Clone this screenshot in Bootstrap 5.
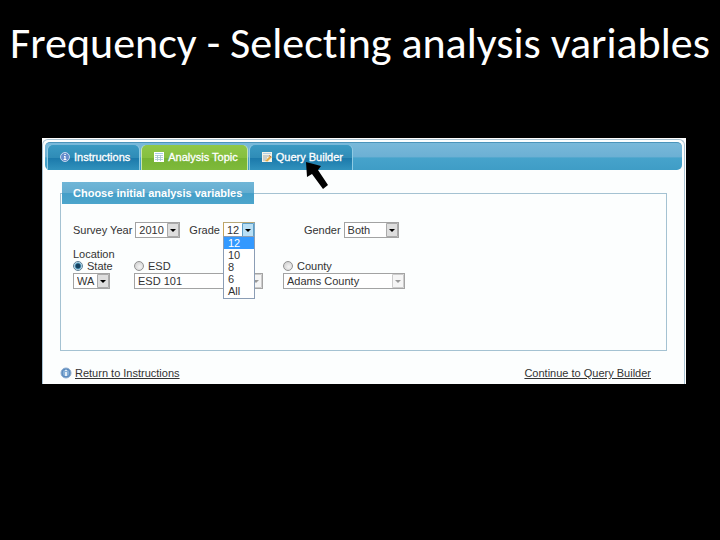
<!DOCTYPE html>
<html lang="en">
<head>
<meta charset="utf-8">
<meta name="viewport" content="width=device-width, initial-scale=1">
<title>Frequency - Selecting analysis variables</title>
<link rel="stylesheet" href="https://cdn.jsdelivr.net/npm/bootstrap@5.3.0/dist/css/bootstrap.min.css">
<style>
body { background: #000; font-family: "Liberation Sans", Arial, sans-serif; font-size: 11px; line-height: 12px; color: #333; }
.slide-title { font-family: Carlito, Lato, sans-serif; font-size: 44px; line-height: 48px; font-variant-ligatures: none; color: #fff; padding: 19px 0 71px; }
.app-shell { margin: 0 34px 0 42px; background: #fff; padding: 1px 1px 0 0; }
.app-frame { border: 1px solid #a9c3d3; border-bottom: 0; border-radius: 6px 6px 0 0; padding: 2px 2px 0; background: #fcfefe; }
.tab-strip { gap: 3px; height: 28px; padding: 2px 3px 0; border-radius: 5px; border-top: 1px solid #4a94bb; background: linear-gradient(#79b9da 0, #6cb0d4 50%, #46a3cb 56%, #3f9dc6 100%); }
.tab-btn { gap: 4px; height: 25px; padding: 0 9px 2px 12px; border: 0; border-radius: 5px 5px 0 0; color: #fff; font-size: 11px; background: linear-gradient(#3a9ac3 0, #2f8cb7 50%, #1c7aab 54%, #3192bd 100%); box-shadow: 1px 0 0 #8fcbe3, -1px 0 0 #8fcbe3; -webkit-text-stroke: .3px #fff; }
.tab-btn.active { background: linear-gradient(#8fc748 0, #86c040 50%, #76b334 54%, #7fba3b 100%); box-shadow: 1px 0 0 #c9e6b0, -1px 0 0 #c9e6b0; }
.variables { margin: 12px 15px 0; min-height: 169px; border: 1px solid #a4c2d2; }
.variables legend { float: none; width: 192px; height: 22px; margin: 0 0 0 1px; padding: 0 0 0 11px; font-size: 11px; line-height: 22px; font-weight: bold; color: #fff; background: linear-gradient(#70b6d7 0, #64add0 48%, #459fc8 52%, #4ca5cc 100%); }
.fields { padding: 18px 12px 0; }
.fields label { margin-right: 3px; }
.pick { appearance: none; height: 16px; padding: 0 14px 0 3px; border: 1px solid #a3a3a3; border-radius: 0; font: inherit; line-height: 14px; color: #333; opacity: 1;
  background: #fff url("data:image/svg+xml,%3Csvg xmlns='http://www.w3.org/2000/svg' width='12' height='14'%3E%3Cpath fill='%23dedede' stroke='%23aaa' d='M.5.5h11v13H.5z'/%3E%3Cpath d='M3 6h6L6 9z'/%3E%3C/svg%3E") right center no-repeat; }
.pick:disabled { color: #333; background-image: url("data:image/svg+xml,%3Csvg xmlns='http://www.w3.org/2000/svg' width='12' height='14'%3E%3Cpath fill='%23f5f5f5' stroke='%23ccc' d='M.5.5h11v13H.5z'/%3E%3Cpath fill='%23999' d='M3 6h6L6 9z'/%3E%3C/svg%3E"); }
.pick-open { border-color: #b8a878 #7ca6c4 #999 #c5a55d; background-image: url("data:image/svg+xml,%3Csvg xmlns='http://www.w3.org/2000/svg' width='12' height='14'%3E%3Cpath fill='%23b8dff5' stroke='%235d9ec7' d='M.5.5h11v13H.5z'/%3E%3Cpath d='M3 6h6L6 9z'/%3E%3C/svg%3E"); }
.w-year { width: 45px; } .w-grade { width: 32px; } .w-gender { width: 55px; }
.w-state { width: 37px; } .w-esd { width: 129px; } .w-county { width: 122px; }
.grade-group { margin-left: 9px; } .gender-group { margin-left: 49px; }
.grade-menu { top: 14px; left: 0; width: 32px; padding: 0 0 1px; border: 1px solid #8b9db5; background: #fff; z-index: 5; }
.grade-menu li { padding-left: 4px; }
.grade-menu .chosen { background: #3399ff; color: #fff; }
.place-title { margin-top: 10px; }
.places { display: grid; grid-template-columns: 61px 149px auto; justify-content: start; row-gap: 1px; }
.dot { appearance: none; width: 10px; height: 10px; margin: 0; border: 1px solid #929292; border-radius: 50%; background: radial-gradient(circle at 60% 60%, #f4f4f4, #c8c8c8); }
.dot:checked { border-color: #5c7f96; background: radial-gradient(circle, #14405e 0 2px, #5fa6c8 3px, #e6eef3 4px); }
.foot { padding: 16px 31px 5px 15px; }
.foot a { color: #333; }
.foot svg { display: block; }
.foot-back { gap: 3px; }
.pointer { left: 303px; top: 158px; z-index: 9; pointer-events: none; }
</style>
</head>
<body>
<h1 class="slide-title text-center text-nowrap fw-normal m-0">Frequency - Selecting analysis variables</h1>
<main class="app-shell">
  <div class="app-frame">
    <nav class="tab-strip d-flex" aria-label="Steps">
      <button type="button" class="tab-btn d-flex align-items-center text-nowrap">
        <svg width="10" height="10" viewBox="0 0 10 10" aria-hidden="true"><circle cx="5" cy="5" r="4.5" fill="#668dcc" stroke="#c5d7ec"/><path d="M5 4.200v3M3.600 7.500h2.800M4 4.500h1.500M4.300 2.500h1.500" stroke="#fff" stroke-width="1.200" fill="none"/></svg>
        <span>Instructions</span>
      </button>
      <button type="button" class="tab-btn active d-flex align-items-center text-nowrap">
        <svg width="10" height="10" viewBox="0 0 10 10" aria-hidden="true"><path fill="#fff" d="M0 0h10v10H0z"/><path fill="#a9cde9" d="M1 1h8v1H1z"/><path d="M1 3.5h8M1 5.5h8M1 7.5h8M3.5 3v6M6.5 3v6" stroke="#a3c4cf" stroke-width=".8"/></svg>
        <span>Analysis Topic</span>
      </button>
      <button type="button" class="tab-btn d-flex align-items-center text-nowrap">
        <svg width="10" height="10" viewBox="0 0 10 10" aria-hidden="true"><path fill="#f4f2e6" d="M0 0h10v10H0z"/><path fill="#b4cfe6" d="M1 1h8v1H1z"/><path d="M1 4h6M1 6h4M1 8h3" stroke="#9fabb2"/><path d="M3 9l5-5 1.500 1.500-4 4z" fill="#e5ab46"/><path d="M7 3.500l2.500 1.500" stroke="#af704c"/></svg>
        <span>Query Builder</span>
      </button>
    </nav>
    <form>
      <fieldset class="variables">
        <legend class="text-nowrap">Choose initial analysis variables</legend>
        <div class="fields">
          <div class="d-flex align-items-center">
            <label for="year" class="text-nowrap">Survey Year</label>
            <select id="year" class="pick w-year"><option>2010</option></select>
            <div class="grade-group d-flex align-items-center">
              <label for="grade">Grade</label>
              <div class="position-relative d-flex">
                <select id="grade" class="pick pick-open w-grade"><option>12</option><option>10</option><option>8</option><option>6</option><option>All</option></select>
                <ul class="grade-menu list-unstyled m-0 position-absolute">
                  <li class="chosen">12</li><li>10</li><li>8</li><li>6</li><li>All</li>
                </ul>
              </div>
            </div>
            <div class="gender-group d-flex align-items-center">
              <label for="gender">Gender</label>
              <select id="gender" class="pick w-gender"><option>Both</option></select>
            </div>
          </div>
          <div class="place-title">Location</div>
          <div class="places">
            <div class="d-flex align-items-center gap-1"><input type="radio" name="place" id="p-state" class="dot" checked><label for="p-state">State</label></div>
            <div class="d-flex align-items-center gap-1"><input type="radio" name="place" id="p-esd" class="dot"><label for="p-esd">ESD</label></div>
            <div class="d-flex align-items-center gap-1"><input type="radio" name="place" id="p-county" class="dot"><label for="p-county">County</label></div>
            <select class="pick w-state" aria-label="State"><option>WA</option></select>
            <select class="pick w-esd" aria-label="ESD" disabled><option>ESD 101</option></select>
            <select class="pick w-county" aria-label="County" disabled><option>Adams County</option></select>
          </div>
        </div>
      </fieldset>
    </form>
    <div class="foot d-flex justify-content-between align-items-center">
      <div class="foot-back d-flex align-items-center">
        <svg width="12" height="12" viewBox="0 0 12 12" aria-hidden="true"><circle cx="6" cy="6" r="5" fill="#5688bd" stroke="#8fadd0"/><circle cx="6" cy="6" r="3.300" fill="#86afd7"/><path d="M6 5v4M6 2.800v1.300" stroke="#fff" stroke-width="1.500"/></svg>
        <a href="#instructions">Return to Instructions</a>
      </div>
      <a href="#query">Continue to Query Builder</a>
    </div>
  </div>
</main>
<svg class="pointer position-absolute" width="28" height="34" viewBox="0 0 28 34" aria-hidden="true"><path d="M3 4L18 8L15 12L25 27L20 31L9 16L4 19Z" fill="#000"/></svg>
<script src="https://cdn.jsdelivr.net/npm/bootstrap@5.3.0/dist/js/bootstrap.bundle.min.js"></script>
</body>
</html>
